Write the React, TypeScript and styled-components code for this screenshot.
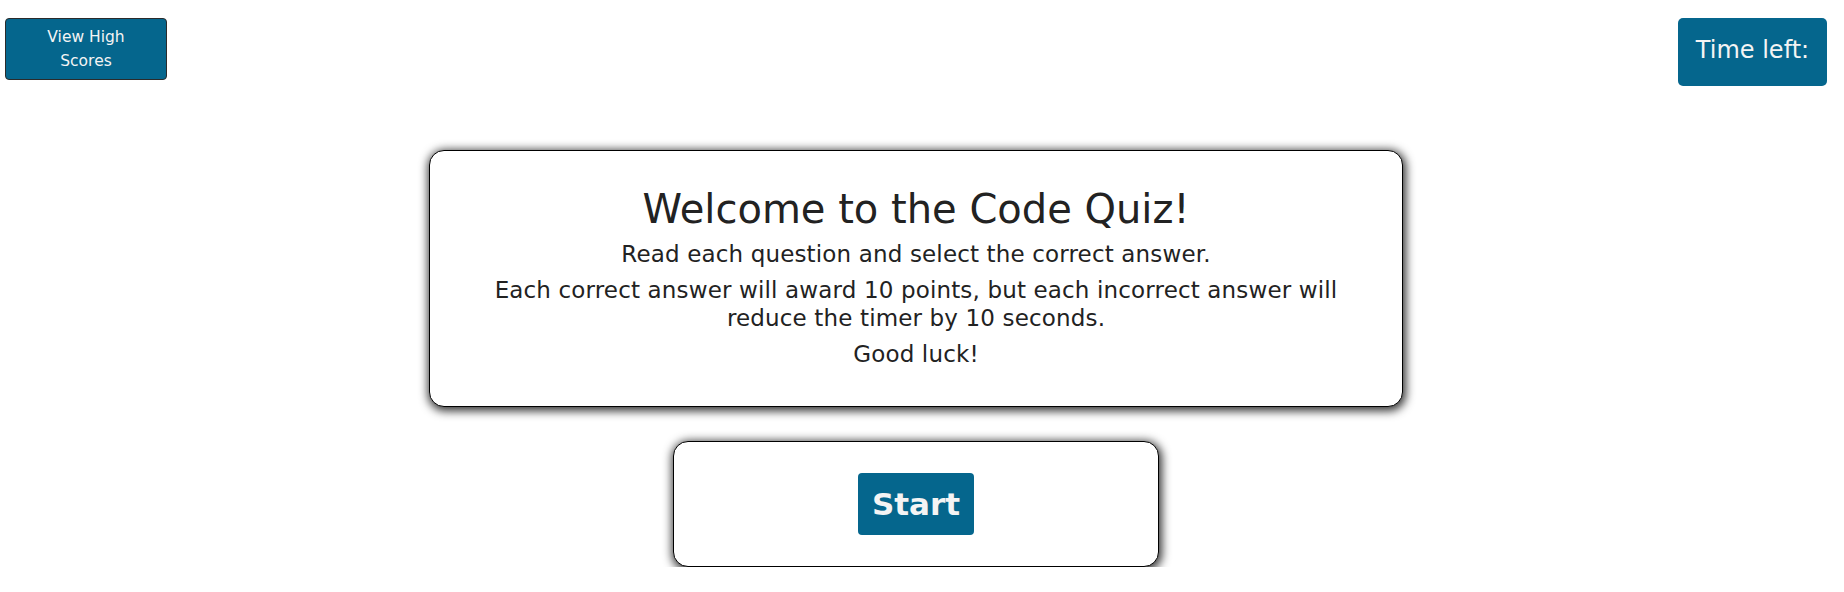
import React from "react";
import styled, { createGlobalStyle } from "styled-components";

const GlobalStyle = createGlobalStyle`
  html, body {
    margin: 0;
    padding: 0;
    background: #ffffff;
  }
  body {
    font-family: "DejaVu Sans", Verdana, sans-serif;
    color: #222222;
  }
`;

const Page = styled.div`
  width: 1832px;
  display: flex;
  flex-direction: column;
  align-items: center;
`;

const Header = styled.header`
  align-self: stretch;
  display: flex;
  justify-content: space-between;
  align-items: flex-start;
  padding: 18px 5px 0;
`;

const ScoresButton = styled.button`
  box-sizing: border-box;
  width: 162px;
  height: 62px;
  background: #05668d;
  color: #f4f4f4;
  border: 1px solid #2b2b2b;
  border-radius: 4px;
  font-family: "DejaVu Sans", Verdana, sans-serif;
  font-size: 15.5px;
  line-height: 24px;
  padding: 0 28px;
  text-align: center;
  cursor: pointer;
`;

const TimerBox = styled.div`
  box-sizing: border-box;
  width: 149px;
  height: 68px;
  background: #05668d;
  color: #f4f4f4;
  border-radius: 5px;
  font-size: 24px;
  display: flex;
  align-items: center;
  justify-content: center;
  padding-bottom: 4px;
`;

const Card = styled.section<{ $width: number }>`
  width: ${(p) => p.$width}px;
  box-sizing: border-box;
  background: #ffffff;
  border: 1px solid #000000;
  border-radius: 15px;
  box-shadow: 1px 2px 10px 2px rgba(0, 0, 0, 0.8);
  text-align: center;
`;

const IntroCard = styled(Card)`
  margin-top: 64px;
  padding: 35px 36px 38px;
`;

const Title = styled.h1`
  margin: 0 0 8px;
  font-size: 40px;
  font-weight: 400;
  line-height: 46px;
`;

const Text = styled.p`
  margin: 0 0 8px;
  font-size: 23px;
  line-height: 28px;
  letter-spacing: 0.15px;

  &:last-child {
    margin-bottom: 0;
  }
`;

const StartCard = styled(Card)`
  margin-top: 34px;
  padding: 31px 0;
  display: flex;
  justify-content: center;
`;

const StartButton = styled.button`
  width: 116px;
  height: 62px;
  background: #05668d;
  color: #f4f4f4;
  border: none;
  border-radius: 4px;
  font-family: "DejaVu Sans", Verdana, sans-serif;
  font-size: 31px;
  font-weight: 700;
  cursor: pointer;
`;

export default function App() {
  return (
    <>
      <GlobalStyle />
      <Page>
        <Header>
          <ScoresButton>View High Scores</ScoresButton>
          <TimerBox>Time left:</TimerBox>
        </Header>
        <IntroCard $width={974}>
          <Title>Welcome to the Code Quiz!</Title>
          <Text>Read each question and select the correct answer.</Text>
          <Text>
            Each correct answer will award 10 points, but each incorrect answer will reduce the
            timer by 10 seconds.
          </Text>
          <Text>Good luck!</Text>
        </IntroCard>
        <StartCard $width={486}>
          <StartButton>Start</StartButton>
        </StartCard>
      </Page>
    </>
  );
}
